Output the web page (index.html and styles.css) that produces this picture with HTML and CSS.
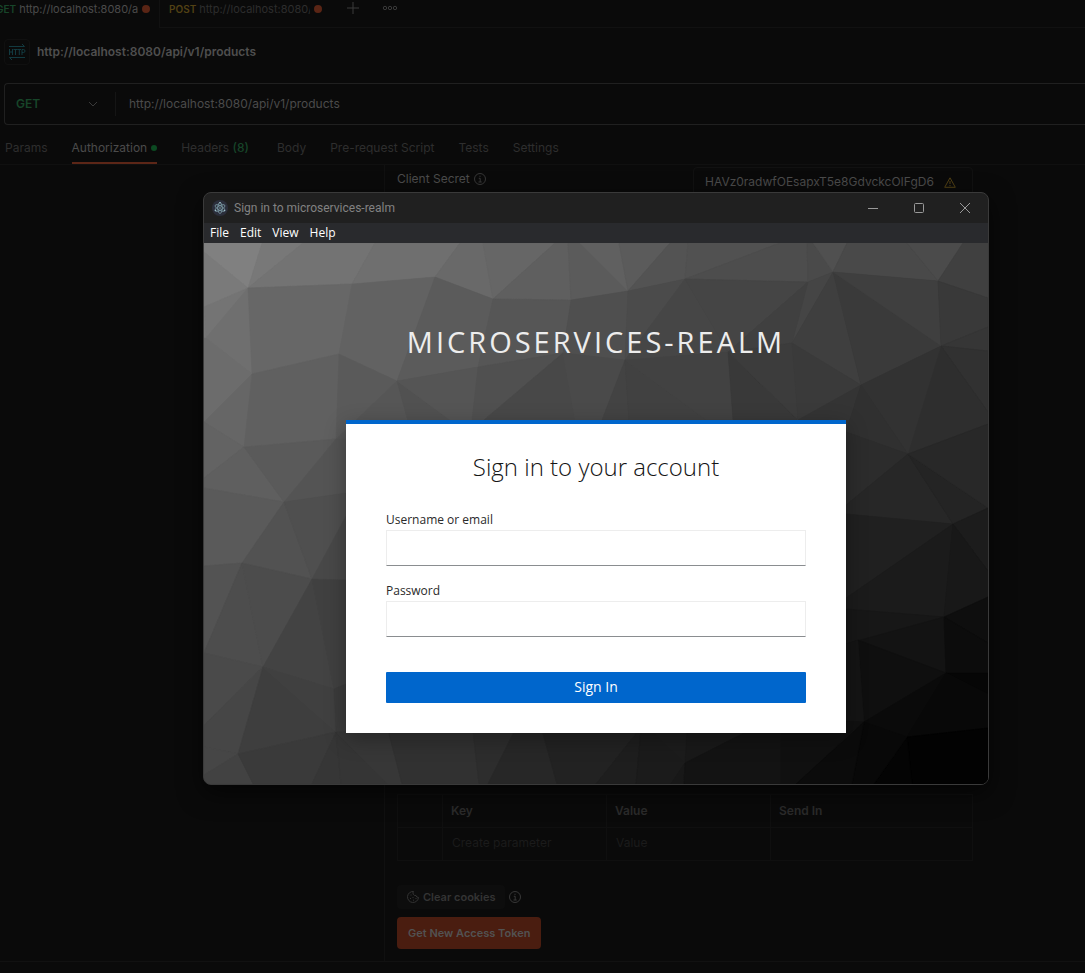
FILE: index.html
```html
<!DOCTYPE html>
<html lang="en">
<head>
<meta charset="utf-8">
<meta name="viewport" content="width=device-width, initial-scale=1">
<title>Sign in to microservices-realm</title>
<link rel="stylesheet" href="styles.css">
</head>
<body>
<div class="app">
  <nav class="tabs">
    <a class="tab tab-active" href="#"><span class="method get">GET</span><span class="tab-url">http://localhost:8080/a</span><span class="unsaved"></span></a>
    <a class="tab" href="#"><span class="method post">POST</span><span class="tab-url">http://localhost:8080/</span><span class="unsaved"></span></a>
    <div class="tab-tools">
      <button class="icon-btn" aria-label="New tab"><svg width="14" height="14" viewBox="0 0 14 14"><path d="M7 1v12M1 7h12" stroke="currentColor" fill="none"/></svg></button>
      <button class="icon-btn" aria-label="Tab options"><svg width="16" height="6" viewBox="0 0 16 6"><g stroke="currentColor" fill="none"><circle cx="3" cy="3" r="1.7"/><circle cx="8" cy="3" r="1.7"/><circle cx="13" cy="3" r="1.7"/></g></svg></button>
    </div>
  </nav>

  <header class="request-title">
    <span class="http-badge"><svg width="18" height="18" viewBox="0 0 18 18" fill="none" stroke="currentColor"><path d="M1 3.5h15.500M14 1l2.500 2.500M17 14.500H1.500M4 17l-2.500-2.500"/><path d="M1.500 6v6M4.500 6v6M1.500 9h3M5.500 6.500h4M7.500 6.500V12M9.500 6.500h3.500M11.300 6.500V12M14 12V6.500h1.500a1.500 1.500 0 0 1 0 3H14"/></svg></span>
    <h1>http://localhost:8080/api/v1/products</h1>
  </header>

  <div class="url-bar">
    <button class="method-select"><span>GET</span><svg width="10" height="6" viewBox="0 0 10 6"><path d="M1 1l4 4 4-4" fill="none" stroke="currentColor"/></svg></button>
    <input class="url-input" type="text" value="http://localhost:8080/api/v1/products" aria-label="Request URL">
  </div>

  <nav class="sections">
    <a href="#">Params</a>
    <a href="#" class="current">Authorization<i class="dot"></i></a>
    <a href="#">Headers <b>(8)</b></a>
    <a href="#">Body</a>
    <a href="#">Pre-request Script</a>
    <a href="#">Tests</a>
    <a href="#">Settings</a>
  </nav>

  <main class="workspace">
    <div class="side"></div>
    <div class="auth">
      <div class="field">
        <label for="secret">Client Secret <svg class="info" width="12" height="12" viewBox="0 0 12 12"><g fill="none" stroke="currentColor"><circle cx="6" cy="6" r="5.500"/><path d="M4.800 5.300H6.200V9M4.500 9h3.200M6 2.700v1.200"/></g></svg></label>
        <div class="secret-box">
          <input id="secret" type="text" value="HAVz0radwfOEsapxT5e8GdvckcOIFgD6">
          <svg class="warn" width="12" height="11" viewBox="0 0 12 11"><path d="M6 .8L11.300 10.300H.7zM6 4v3M6 8v1.200" fill="none" stroke="currentColor"/></svg>
        </div>
      </div>
      <div class="auth-foot">
        <table class="params">
          <thead><tr><th class="check"></th><th>Key</th><th>Value</th><th class="send">Send In</th></tr></thead>
          <tbody><tr><td></td><td>Create parameter</td><td>Value</td><td></td></tr></tbody>
        </table>
        <div class="cookies">
          <button class="clear"><svg width="12" height="12" viewBox="0 0 12 12" fill="none" stroke="currentColor"><path d="M6.500.5A5.500 5.500 0 1 0 11.500 6.500 2.500 2.500 0 0 1 9 4.500 2.500 2.500 0 0 1 6.500.5zM3.500 4h1M5.500 6.500h1M3 7.500h1M6 9.200h1M8.500 7.500h1"/></svg>Clear cookies</button>
          <svg class="info" width="12" height="12" viewBox="0 0 12 12"><g fill="none" stroke="currentColor"><circle cx="6" cy="6" r="5.500"/><path d="M4.800 5.300H6.200V9M4.500 9h3.200M6 2.700v1.200"/></g></svg>
        </div>
        <button class="token">Get New Access Token</button>
      </div>
    </div>
  </main>
  <footer class="statusbar"></footer>
</div>

<section class="window" role="dialog" aria-label="Sign in to microservices-realm">
  <header class="titlebar">
    <svg class="electron" width="16" height="16" viewBox="0 0 16 16"><circle cx="8" cy="8" r="8" fill="#2b2e3b"/><g fill="none" stroke="#86a9b3" stroke-width=".7"><ellipse cx="8" cy="8" rx="5.500" ry="2.200" transform="rotate(30 8 8)"/><ellipse cx="8" cy="8" rx="5.500" ry="2.200" transform="rotate(90 8 8)"/><ellipse cx="8" cy="8" rx="5.500" ry="2.200" transform="rotate(150 8 8)"/></g><g fill="#9fc4cd"><circle cx="8" cy="8" r=".7"/><circle cx="8" cy="2.800" r=".8"/><circle cx="3.500" cy="10.500" r=".8"/><circle cx="12.500" cy="10.500" r=".8"/></g></svg>
    <span class="window-title">Sign in to microservices-realm</span>
    <div class="window-controls">
      <button aria-label="Minimize"><svg width="12" height="12" viewBox="0 0 12 12"><path d="M1 6.500h10" stroke="currentColor"/></svg></button>
      <button aria-label="Maximize"><svg width="12" height="12" viewBox="0 0 12 12"><rect x="1.500" y="1.500" width="9" height="9" rx="1" fill="none" stroke="currentColor"/></svg></button>
      <button aria-label="Close"><svg width="12" height="12" viewBox="0 0 12 12"><path d="M1 1l10 10M11 1L1 11" stroke="currentColor"/></svg></button>
    </div>
  </header>
  <nav class="menubar"><a href="#">File</a><a href="#">Edit</a><a href="#">View</a><a href="#">Help</a></nav>
  <div class="login">
    <svg class="facets" viewBox="204 243 784 541" preserveAspectRatio="none" aria-hidden="true">
      <polygon color="#808080" points="204,243 262,243 248,288 204,252"/>
      <polygon color="#7a7a7a" points="204,252 248,288 204,307"/>
      <polygon color="#787878" points="262,243 303,243 248,288"/>
      <polygon color="#737373" points="303,243 375,243 352,284 248,288"/>
      <polygon color="#6f6f6f" points="375,243 460,243 435,277 352,284"/>
      <polygon color="#696969" points="460,243 483,243 493,299 435,277"/>
      <polygon color="#666" points="483,243 555,243 493,299"/>
      <polygon color="#5f5f5f" points="555,243 568,243 571,300 493,299"/>
      <polygon color="#5b5b5b" points="568,243 580,243 628,291 571,300"/>
      <polygon color="#606060" points="580,243 619,243 628,291"/>
      <polygon color="#5b5b5b" points="619,243 670,243 628,291"/>
      <polygon color="#535353" points="670,243 688,243 685,279 628,291"/>
      <polygon color="#515151" points="688,243 780,243 685,279"/>
      <polygon color="#4d4d4d" points="780,243 807,243 808,282 685,279"/>
      <polygon color="#4a4a4a" points="807,243 813,243 833,272 808,282"/>
      <polygon color="#505050" points="813,243 847,243 833,272"/>
      <polygon color="#494949" points="847,243 907,243 938,281 833,272"/>
      <polygon color="#4b4b4b" points="907,243 963,243 938,281"/>
      <polygon color="#404040" points="963,243 988,243 988,298 938,281"/>
      <polygon color="#747474" points="204,307 248,288 206,338"/>
      <polygon color="#6f6f6f" points="206,338 248,288 252,374"/>
      <polygon color="#676767" points="248,288 352,284 339,354 252,374"/>
      <polygon color="#626262" points="352,284 435,277 397,381 339,354"/>
      <polygon color="#5b5b5b" points="435,277 493,299 478,367 397,381"/>
      <polygon color="#565656" points="493,299 571,300 563,353 478,367"/>
      <polygon color="#4f4f4f" points="571,300 628,291 625,360 563,353"/>
      <polygon color="#4b4b4b" points="628,291 685,279 625,360"/>
      <polygon color="#464646" points="685,279 728,352 625,360"/>
      <polygon color="#454545" points="685,279 808,282 728,352"/>
      <polygon color="#454545" points="808,282 833,272 792,343"/>
      <polygon color="#404040" points="808,282 792,343 728,352"/>
      <polygon color="#3f3f3f" points="833,272 792,343 861,385"/>
      <polygon color="#3a3a3a" points="833,272 941,346 861,385"/>
      <polygon color="#3f3f3f" points="833,272 938,281 941,346"/>
      <polygon color="#393939" points="938,281 988,298 988,327 941,346"/>
      <polygon color="#363636" points="941,346 988,327 988,351"/>
      <polygon color="#313131" points="941,346 988,351 988,412"/>
      <polygon color="#2e2e2e" points="941,346 988,412 988,424 908,454"/>
      <polygon color="#323232" points="861,385 941,346 908,454"/>
      <polygon color="#6c6c6c" points="204,338 206,338 252,374 204,422"/>
      <polygon color="#666" points="204,422 252,374 244,447"/>
      <polygon color="#606060" points="252,374 339,354 336,439 244,447"/>
      <polygon color="#5a5a5a" points="339,354 397,381 336,439"/>
      <polygon color="#565656" points="397,381 413,440 336,439"/>
      <polygon color="#515151" points="397,381 450,420 413,440"/>
      <polygon color="#555" points="397,381 478,367 472,420 450,420"/>
      <polygon color="#505050" points="478,367 563,353 484,420 472,420"/>
      <polygon color="#484848" points="563,353 575,420 484,420"/>
      <polygon color="#4a4a4a" points="563,353 625,360 602,420 575,420"/>
      <polygon color="#434343" points="625,360 629,420 602,420"/>
      <polygon color="#414141" points="625,360 706,420 629,420"/>
      <polygon color="#424242" points="625,360 728,352 733,420 706,420"/>
      <polygon color="#393939" points="728,352 798,420 733,420"/>
      <polygon color="#3c3c3c" points="728,352 792,343 798,420"/>
      <polygon color="#3a3a3a" points="792,343 861,385 798,420"/>
      <polygon color="#343434" points="798,420 861,385 846,432"/>
      <polygon color="#303030" points="861,385 908,454 846,432"/>
      <polygon color="#2c2c2c" points="908,454 846,432 846,505"/>
      <polygon color="#272727" points="908,454 846,505 846,514 953,524"/>
      <polygon color="#242424" points="908,454 953,524 988,508"/>
      <polygon color="#282828" points="908,454 988,508 988,424"/>
      <polygon color="#1c1c1c" points="953,524 988,508 988,571"/>
      <polygon color="#202020" points="953,524 846,514 846,598"/>
      <polygon color="#1b1b1b" points="953,524 846,598 846,609 944,617"/>
      <polygon color="#181818" points="953,524 944,617 988,597 988,571"/>
      <polygon color="#171717" points="944,617 846,609 846,644"/>
      <polygon color="#131313" points="944,617 846,644 858,640 946,673"/>
      <polygon color="#0e0e0e" points="944,617 988,597 988,643"/>
      <polygon color="#0c0c0c" points="944,617 988,643 988,673 946,673"/>
      <polygon color="#0f0f0f" points="858,640 946,673 864,722"/>
      <polygon color="#141414" points="858,640 864,722 846,721 846,644"/>
      <polygon color="#0a0a0a" points="946,673 864,722 907,737"/>
      <polygon color="#060606" points="946,673 988,673 988,694"/>
      <polygon color="#080808" points="946,673 988,694 988,728 907,737"/>
      <polygon color="#020202" points="907,737 988,728 988,784 912,784"/>
      <polygon color="#040404" points="907,737 912,784 874,784"/>
      <polygon color="#080808" points="907,737 874,784 852,784 864,722"/>
      <polygon color="#101010" points="846,721 864,722 850,733 846,733"/>
      <polygon color="#636363" points="204,422 244,447 204,478"/>
      <polygon color="#5f5f5f" points="204,478 244,447 284,502 204,488"/>
      <polygon color="#5a5a5a" points="244,447 336,439 284,502"/>
      <polygon color="#545454" points="336,439 413,440 413,490 284,502"/>
      <polygon color="#5a5a5a" points="204,488 284,502 242,563 204,566"/>
      <polygon color="#525252" points="284,502 312,579 242,563"/>
      <polygon color="#4f4f4f" points="284,502 346,493 346,516 312,579"/>
      <polygon color="#484848" points="312,579 346,516 346,580"/>
      <polygon color="#535353" points="204,566 242,563 204,653"/>
      <polygon color="#4d4d4d" points="204,653 242,563 263,667"/>
      <polygon color="#4c4c4c" points="242,563 312,579 263,667"/>
      <polygon color="#434343" points="312,579 334,689 263,667"/>
      <polygon color="#404040" points="312,579 346,580 346,684 334,689"/>
      <polygon color="#4a4a4a" points="204,653 263,667 204,725"/>
      <polygon color="#464646" points="204,725 263,667 238,754 204,747"/>
      <polygon color="#3e3e3e" points="263,667 336,732 238,754"/>
      <polygon color="#404040" points="263,667 334,689 336,732"/>
      <polygon color="#3b3b3b" points="334,689 346,684 346,731 336,732"/>
      <polygon color="#464646" points="204,747 238,754 204,775"/>
      <polygon color="#424242" points="204,775 238,754 253,784 204,784"/>
      <polygon color="#3a3a3a" points="238,754 336,732 312,784 253,784"/>
      <polygon color="#363636" points="336,732 341,784 312,784"/>
      <polygon color="#353535" points="336,732 387,784 341,784"/>
      <polygon color="#373737" points="336,732 389,730 402,784 387,784"/>
      <polygon color="#313131" points="388,730 473,730 479,784 402,784"/>
      <polygon color="#2d2d2d" points="473,730 515,730 488,784 479,784"/>
      <polygon color="#272727" points="515,730 542,730 557,784 488,784"/>
      <polygon color="#222" points="542,730 639,730 596,784 557,784"/>
      <polygon color="#1e1e1e" points="639,730 641,730 636,784 596,784"/>
      <polygon color="#1b1b1b" points="641,730 652,730 685,763 671,784 636,784"/>
      <polygon color="#1c1c1c" points="652,730 687,730 685,763"/>
      <polygon color="#191919" points="687,730 750,730 685,763"/>
      <polygon color="#181818" points="685,763 684,784 671,784"/>
      <polygon color="#131313" points="750,730 781,730 781,784 684,784 685,763"/>
      <polygon color="#101010" points="781,730 853,730 798,784 781,784"/>
      <polygon color="#0b0b0b" points="864,722 852,784 796,784"/>
    </svg>
    <h2 class="realm">microservices-realm</h2>
    <form class="card">
      <h3>Sign in to your account</h3>
      <label for="username">Username or email</label>
      <input id="username" type="text">
      <label for="password">Password</label>
      <input id="password" type="password">
      <button type="submit">Sign In</button>
    </form>
  </div>
</section>
</body>
</html>
```
FILE: styles.css
```css
* { box-sizing: border-box; }

body {
  margin: 0;
  background: #0a0a0a;
  color: #4b4b4b;
  font: 12px/16px Inter, "Liberation Sans", sans-serif;
}

a { color: inherit; text-decoration: none; }
button, input { font: inherit; color: inherit; background: none; border: 0; margin: 0; padding: 0; }
button { cursor: pointer; }
svg { display: block; flex: none; }

.app {
  position: relative;
  display: flex;
  flex-direction: column;
  min-height: 100vh;
  overflow: hidden;
}

/* request tabs */
.tabs { display: flex; height: 28px; }
.tab {
  display: flex;
  align-items: center;
  width: 174px;
  padding: 0 11px 10px 9px;
  border: solid #111;
  border-width: 0 0 1px 1px;
  color: #2d2d2d;
  font-size: 11px;
}
.tab-active { width: 163px; padding: 0 9px 10px 0; border-color: transparent; border-left: 0; color: #4b4b4b; margin-left: -4px; }
.method { font-size: 10px; font-weight: 600; margin-right: 3px; }
.get { color: #174529; }
.post { color: #524114; }
.tab-url { flex: 1; min-width: 0; overflow: hidden; white-space: nowrap; }
.unsaved { width: 8px; height: 8px; margin-left: 4px; border-radius: 50%; background: #5a2515; }
.tab-tools { display: flex; flex: 1; gap: 22px; align-items: center; padding: 0 13px 11px; border-bottom: 1px solid #111; color: #3a3a3a; }
.icon-btn { display: flex; }

/* title and url */
.request-title { display: flex; align-items: center; gap: 7px; padding: 11px 4px; }
.http-badge { display: grid; place-items: center; width: 26px; height: 26px; border: 1px solid #101010; border-radius: 4px; color: #123a40; }
h1 { margin: 0; font-size: 12px; font-weight: 600; line-height: 16px; color: #4f4f4f; }
.url-bar {
  display: flex;
  align-items: center;
  height: 42px;
  margin: 7px 0 0 4px;
  border: 1px solid #202020;
  border-right: 0;
  border-radius: 4px 0 0 4px;
}
.method-select {
  display: flex;
  align-items: center;
  justify-content: space-between;
  width: 111px;
  height: 24px;
  padding: 0 17px 0 11px;
  border-right: 1px solid #151515;
  color: #3a3a3a;
}
.method-select span { font-weight: 600; color: #174529; }
.url-input { flex: 1; padding-left: 13px; outline: 0; }

/* request sections */
.sections { display: flex; gap: 24px; padding: 11px 5px 0; height: 40px; border-bottom: 1px solid #101010; color: #2e2e2e; }
.sections a { padding-top: 4px; height: 28px; white-space: nowrap; }
.sections b { padding-right: 4px; font-weight: 500; color: #174529; }
.sections .current { display: flex; gap: 4px; color: #4b4b4b; border-bottom: 2px solid #5c2617; }
.dot { width: 6px; height: 6px; margin-top: 5px; border-radius: 50%; background: #0c4a22; }

/* authorization pane */
.workspace { display: flex; flex: 1; }
.side { width: 385px; border-right: 1px solid #101010; }
.auth { display: flex; flex: 1; flex-direction: column; justify-content: space-between; padding: 2px 112px 12px 12px; }
.field { display: flex; justify-content: space-between; }
.field label { display: flex; align-items: center; gap: 4px; height: 24px; }
.info { color: #383838; }
.secret-box { display: flex; align-items: center; justify-content: space-between; width: 280px; height: 30px; padding: 0 16px 0 11px; border: 1px solid #111; border-radius: 4px; }
.secret-box input { flex: 1; min-width: 0; outline: 0; }
.warn { color: #524114; }
.params { width: 100%; border-collapse: collapse; table-layout: fixed; text-align: left; }
.params th, .params td { height: 33px; padding: 0 8px 1px; border: 1px solid #0f0f0f; font-weight: 400; color: #1b1b1b; }
.params td { padding: 0 9px 2px; }
.params th { font-weight: 600; color: #2b2b2b; }
.params .check { width: 45px; }
.params .send { width: 202px; }
.cookies { display: flex; align-items: center; gap: 4px; margin: 24px 0 8px; }
.clear { display: flex; align-items: center; gap: 4px; height: 24px; padding: 0 9px 0 10px; border-radius: 4px; background: #0d0d0d; font-size: 11px; font-weight: 600; color: #343434; }
.token { height: 32px; padding: 0 11px; border-radius: 4px; background: #4a1d10; font-size: 11px; font-weight: 600; color: #525252; }
.statusbar { height: 12px; border-top: 1px solid #111; }

/* sign-in window */
.window {
  position: absolute;
  top: 192px;
  left: 203px;
  right: 96px;
  overflow: hidden;
  border: 1px solid #3a3a3a;
  border-radius: 8px;
  background: #202020;
  box-shadow: 0 8px 24px rgba(0, 0, 0, .6);
  font-family: "Open Sans", "Noto Sans", sans-serif;
}
.titlebar { display: flex; align-items: center; gap: 6px; height: 30px; padding-left: 8px; color: #828282; }
.window-title { flex: 1; font-family: Roboto, "Open Sans", sans-serif; }
.window-controls { display: flex; color: #999; }
.window-controls button { display: grid; place-items: center; width: 46px; height: 28px; }
.menubar { display: flex; gap: 11px; height: 20px; padding: 2px 6px; background: #292a2d; color: #fff; }

.login { position: relative; padding: 80px 142px 51px; background: linear-gradient(135deg, #808080, #000); }
.facets { position: absolute; inset: 0; width: 100%; height: 100%; }
.facets polygon { fill: currentColor; stroke: currentColor; stroke-width: .5px; }
.realm {
  position: relative;
  margin: 0 0 59px;
  font-size: 29px;
  font-weight: 400;
  line-height: 38px;
  letter-spacing: 3px;
  text-align: center;
  text-transform: uppercase;
  white-space: nowrap;
  color: #ededed;
}
.card {
  position: relative;
  display: flex;
  flex-direction: column;
  max-width: 500px;
  margin: 0 auto;
  padding: 27px 40px 30px;
  border-top: 4px solid #06c;
  background: #fff;
  box-shadow: 0 6px 20px rgba(0, 0, 0, .3);
  color: #151515;
}
.card h3 { margin: 0 0 28px; font-size: 24px; font-weight: 300; line-height: 32px; text-align: center; }
.card label { padding-bottom: 1px; font-size: 12px; line-height: 18px; color: #2a2a2a; }
.card input { height: 36px; margin-bottom: 16px; padding: 0 8px; border: 1px solid #ededed; border-bottom-color: #8a8d90; outline: 0; }
.card button { height: 31px; margin-top: 19px; padding-bottom: 2px; border-radius: 1px; background: #06c; color: #fff; font-size: 14px; }
```
